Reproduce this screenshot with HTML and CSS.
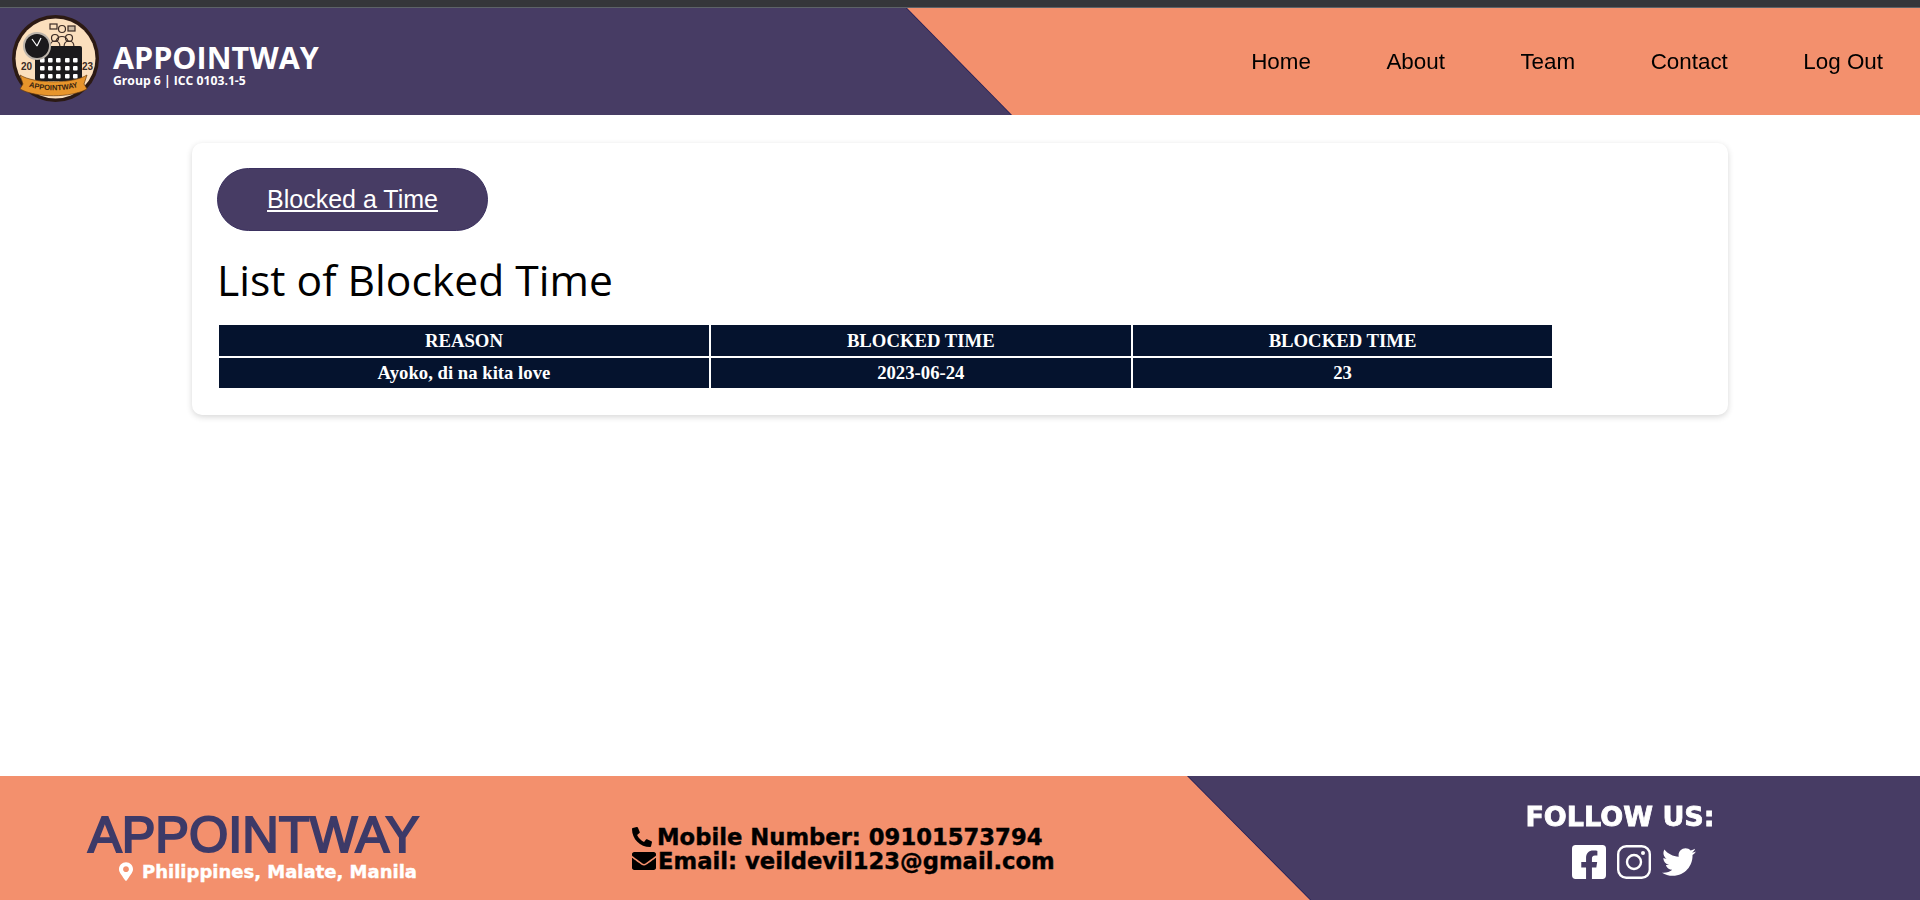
FILE: index.html
```html
<!DOCTYPE html>
<html lang="en">

<head>
    <meta charset="UTF-8">
    <title>Appointway</title>
    <link rel="stylesheet" href="styles.css">
</head>

<body>
    <div class="browser-edge"></div>

    <header class="header">
        <div class="brand">
            <svg class="logo" viewBox="0 0 87 87">
                <circle cx="43.5" cy="43.5" r="43.5" fill="#2c1a14"/>
                <circle cx="43.5" cy="43.5" r="40" fill="#fbdfbd"/>
                <!-- people and speech bubbles -->
                <g fill="none" stroke="#3a2a24" stroke-width="1.2">
                    <rect x="38" y="9" width="7" height="5" fill="#fbdfbd"/>
                    <rect x="56" y="11" width="7" height="5" fill="#cbb9a3"/>
                    <circle cx="50" cy="14" r="3.5" fill="#fbdfbd"/>
                    <circle cx="43" cy="23" r="3.5" fill="#fbdfbd"/>
                    <circle cx="57" cy="23" r="3.5" fill="#fbdfbd"/>
                    <path d="M44 26c2-6 10-6 12 0M38 32c0-5 3-6 5-6s5 1 5 6M52 32c0-5 3-6 5-6s5 1 5 6"/>
                </g>
                <!-- calendar -->
                <rect x="23" y="31" width="47" height="35" rx="2" fill="#1b1a1c"/>
                <g fill="#fff">
                    <rect x="28" y="43" width="4.6" height="4.6" rx="1"/><rect x="36" y="43" width="4.6" height="4.6" rx="1"/><rect x="44" y="43" width="4.6" height="4.6" rx="1"/><rect x="53" y="43" width="4.6" height="4.6" rx="1"/><rect x="61" y="43" width="4.6" height="4.6" rx="1"/>
                    <rect x="28" y="51" width="4.6" height="4.6" rx="1"/><rect x="36" y="51" width="4.6" height="4.6" rx="1"/><rect x="44" y="51" width="4.6" height="4.6" rx="1"/><rect x="53" y="51" width="4.6" height="4.6" rx="1"/><rect x="61" y="51" width="4.6" height="4.6" rx="1"/>
                    <rect x="28" y="59" width="4.6" height="4.6" rx="1"/><rect x="36" y="59" width="4.6" height="4.6" rx="1"/><rect x="44" y="59" width="4.6" height="4.6" rx="1"/><rect x="53" y="59" width="4.6" height="4.6" rx="1"/><rect x="61" y="59" width="4.6" height="4.6" rx="1"/>
                </g>
                <!-- clock -->
                <circle cx="25" cy="31" r="14" fill="#bdb5ab"/>
                <circle cx="25" cy="31" r="12" fill="#1b1a1c"/>
                <path d="M25 31l-5-7M25 31l4-8" stroke="#fff" stroke-width="1.2" fill="none"/>
                <!-- year -->
                <text class="logo-year" x="9" y="55">20</text>
                <text class="logo-year" x="70" y="55">23</text>
                <!-- ribbon -->
                <path d="M8 60c14 9 53 9 67 0l-3 9 3 5c-16 9-51 9-67 0l3-5z" fill="#e8952b" stroke="#6b3d10" stroke-width=".7"/>
                <path id="ribbon-line" d="M12 70c16 7 43 7 59 0" fill="none"/>
                <text class="logo-ribbon"><textPath href="#ribbon-line" startOffset="50%" text-anchor="middle">APPOINTWAY</textPath></text>
            </svg>
            <div class="brand-text">
                <div class="brand-name">APPOINTWAY</div>
                <div class="brand-group">Group 6 | ICC 0103.1-5</div>
            </div>
        </div>
        <div class="edge-line">
            <nav class="nav">
                <a href="#">Home</a>
                <a href="#">About</a>
                <a href="#">Team</a>
                <a href="#">Contact</a>
                <a href="#">Log Out</a>
            </nav>
        </div>
    </header>

    <main class="main">
        <section class="card">
            <a class="btn" href="#">Blocked a Time</a>
            <h1 class="card-title">List of Blocked Time</h1>
            <table class="time-table">
                <tr>
                    <th class="col-reason">REASON</th>
                    <th class="col-time">BLOCKED TIME</th>
                    <th class="col-time">BLOCKED TIME</th>
                </tr>
                <tr>
                    <td>Ayoko, di na kita love</td>
                    <td>2023-06-24</td>
                    <td>23</td>
                </tr>
            </table>
        </section>
    </main>

    <footer class="footer">
        <div class="footer-brand">
            <div class="footer-name">APPOINTWAY</div>
            <div class="footer-address">
                <svg class="icon-pin" viewBox="0 0 384 512"><path d="M172.268 501.67C26.97 291.031 0 256.162 0 192 0 85.961 85.961 0 192 0s192 85.961 192 192c0 64.162-26.97 99.031-172.268 309.67-9.535 13.774-29.93 13.773-39.464 0zM192 272c44.183 0 80-35.817 80-80s-35.817-80-80-80-80 35.817-80 80 35.817 80 80 80z"/></svg>
                <span>Philippines, Malate, Manila</span>
            </div>
        </div>
        <div class="footer-contact">
            <div class="contact-row">
                <svg class="icon-phone" viewBox="0 0 512 512"><path transform="matrix(-1 0 0 1 512 0)" d="M493.4 24.6l-104-24c-11.3-2.6-22.9 3.3-27.5 13.9l-48 112c-4.2 9.8-1.4 21.3 6.9 28l60.6 49.6c-36 76.7-98.9 140.5-177.2 177.2l-49.6-60.6c-6.8-8.3-18.2-11.1-28-6.9l-112 48C3.9 366.5-2 378.1.6 389.4l24 104C27.1 504.2 36.7 512 48 512c256.1 0 464-207.5 464-464 0-11.2-7.7-20.9-18.6-23.4z"/></svg>
                <span>Mobile Number: 09101573794</span>
            </div>
            <div class="contact-row">
                <svg class="icon-mail" viewBox="0 0 512 512"><path d="M502.3 190.8c3.9-3.1 9.7-.2 9.7 4.7V400c0 26.5-21.5 48-48 48H48c-26.5 0-48-21.5-48-48V195.6c0-5 5.7-7.8 9.7-4.7 22.4 17.4 52.1 39.5 154.1 113.6 21.1 15.4 56.7 47.8 92.2 47.6 35.7.3 72-32.8 92.3-47.6 102-74.1 131.6-96.3 154-113.7zM256 320c23.2.4 56.6-29.2 73.4-41.4 132.7-96.3 142.8-104.7 173.4-128.7 5.8-4.5 9.2-11.5 9.2-18.9v-19c0-26.5-21.5-48-48-48H48C21.5 64 0 85.5 0 112v19c0 7.4 3.4 14.3 9.2 18.9 30.6 23.9 40.7 32.4 173.4 128.7 16.8 12.2 50.2 41.8 73.4 41.4z"/></svg>
                <span>Email: veildevil123@gmail.com</span>
            </div>
        </div>
        <div class="edge-line social-edge">
            <div class="footer-social">
                <div class="follow-title">FOLLOW US:</div>
                <div class="follow-icons">
                    <svg viewBox="0 32 448 448"><path d="M400 32H48A48 48 0 0 0 0 80v352a48 48 0 0 0 48 48h137.25V327.69h-63V256h63v-54.64c0-62.15 37-96.48 93.67-96.48 27.14 0 55.52 4.84 55.52 4.84v61h-31.27c-30.81 0-40.42 19.12-40.42 38.73V256h68.78l-11 71.69h-57.78V480H400a48 48 0 0 0 48-48V80a48 48 0 0 0-48-48z"/></svg>
                    <svg viewBox="0 0 34 34"><rect x="1.2" y="1.2" width="31.6" height="31.6" rx="8" fill="none" stroke="#fff" stroke-width="2.4"/><circle cx="17" cy="17" r="7" fill="none" stroke="#fff" stroke-width="2.4"/><circle cx="26" cy="8" r="2"/></svg>
                    <svg viewBox="0 0 512 512"><path d="M459.37 151.716c.325 4.548.325 9.097.325 13.645 0 138.72-105.583 298.558-298.558 298.558-59.452 0-114.68-17.219-161.137-47.106 8.447.974 16.568 1.299 25.34 1.299 49.055 0 94.213-16.568 130.274-44.832-46.132-.975-84.792-31.188-98.112-72.772 6.498.974 12.995 1.624 19.818 1.624 9.421 0 18.843-1.3 27.614-3.573-48.081-9.747-84.143-51.98-84.143-102.985v-1.299c13.969 7.797 30.214 12.67 47.431 13.319-28.264-18.843-46.781-51.005-46.781-87.391 0-19.492 5.197-37.36 14.294-52.954 51.655 63.675 129.3 105.258 216.365 109.807-1.624-7.797-2.599-15.918-2.599-24.04 0-57.828 46.782-104.934 104.934-104.934 30.213 0 57.502 12.67 76.67 33.137 23.715-4.548 46.456-13.32 66.599-25.34-7.798 24.366-24.366 44.833-46.132 57.827 21.117-2.273 41.584-8.122 60.426-16.243-14.292 20.791-32.161 39.308-52.628 54.253z"/></svg>
                </div>
            </div>
        </div>
    </footer>
</body>

</html>
```

FILE: styles.css
```css
body, html {
    margin: 0;
    padding: 0;
    height: 100%;
    overflow: hidden;
    font-family: "Liberation Sans", Arial, sans-serif;
}

body {
    display: flex;
    flex-direction: column;
    background-color: white;
}

.browser-edge {
    height: 7px;
    background-color: #35363a;
    border-bottom: 1px solid #5d6268;
}

.header {
    height: 107px;
    display: flex;
    justify-content: space-between;
    background-color: #473c64;
}

.brand {
    display: flex;
    align-items: center;
    padding-left: 12px;
}

.logo {
    width: 87px;
    height: 87px;
    margin-top: -6px;
}

.logo-year {
    font-family: "Liberation Sans", sans-serif;
    font-size: 10px;
    font-weight: bold;
    fill: #3a2a24;
}

.logo-ribbon {
    font-family: "Liberation Sans", sans-serif;
    font-size: 7.5px;
    font-weight: bold;
    fill: #3a2410;
}

.brand-text {
    margin: 6px 0 0 14px;
    color: white;
    font-family: "Open Sans", sans-serif;
    font-weight: bold;
}

.brand-name {
    font-size: 30.5px;
    line-height: 32px;
}

.brand-group {
    font-size: 12.2px;
    line-height: 15px;
}

/* thin dark line along the slanted edges */
.edge-line {
    display: flex;
    filter: drop-shadow(-1px 0 0 #1e1a55);
}

.nav {
    width: 1013px;
    box-sizing: border-box;
    display: flex;
    align-items: center;
    justify-content: flex-end;
    gap: 75.5px;
    padding: 0 37px 0 0;
    background-color: #f3906d;
    clip-path: polygon(0 0, 100% 0, 100% 100%, 105px 100%);
}

.nav a {
    color: black;
    font-size: 22.4px;
    text-decoration: none;
}

.main {
    flex: 1;
    padding-top: 28px;
}

.card {
    width: 80%;
    box-sizing: border-box;
    margin: 0 auto;
    padding: 25px;
    border-radius: 10px;
    box-shadow: 0 2px 6px rgba(0, 0, 0, 0.16);
    background-color: white;
}

.btn {
    display: inline-block;
    box-sizing: border-box;
    width: 271px;
    height: 63px;
    line-height: 61px;
    text-align: center;
    color: white;
    font-size: 25px;
    background-color: #473c64;
    border: 1px solid #3b3160;
    border-radius: 32px;
}

.card-title {
    margin: 23px 0 19px;
    font-family: "Open Sans", sans-serif;
    font-size: 42.6px;
    font-weight: 400;
    line-height: 50px;
    color: black;
}

.time-table {
    width: 90%;
    color: white;
    font-family: "Liberation Serif", "Times New Roman", serif;
    font-size: 18.72px;
    font-weight: bold;
    text-align: center;
}

.time-table th, .time-table td {
    padding: 0 6px;
    background-color: #05132e;
}

.time-table th {
    height: 31px;
}

.time-table td {
    height: 30px;
}

.col-reason {
    width: 36.85%;
}

.col-time {
    width: 31.57%;
}

.footer {
    height: 124px;
    display: flex;
    background-color: #f3906d;
}

.footer-brand {
    width: 544px;
    box-sizing: border-box;
    padding: 34px 0 0 88px;
}

.footer-name {
    color: #3d3a68;
    font-size: 50.5px;
    line-height: 50px;
    -webkit-text-stroke: 2px #3d3a68;
}

.footer-address {
    display: flex;
    align-items: center;
    gap: 9px;
    margin: 1px 0 0 31px;
    color: white;
    font-family: "DejaVu Sans", sans-serif;
    font-size: 18px;
    font-weight: bold;
    -webkit-text-stroke: 0.4px white;
}

.icon-pin {
    width: 14px;
    height: 21px;
    fill: white;
}

.footer-contact {
    width: 644px;
    box-sizing: border-box;
    padding: 49px 0 0 88px;
    color: black;
    font-family: "DejaVu Sans", sans-serif;
    font-size: 22.7px;
    font-weight: bold;
    -webkit-text-stroke: 0.4px black;
}

.contact-row {
    display: flex;
    align-items: center;
    height: 24px;
    gap: 2px;
}

.icon-phone {
    width: 20px;
    height: 20px;
    margin-right: 3px;
}

.icon-mail {
    width: 24px;
    height: 24px;
}

.social-edge {
    flex: 1;
}

.footer-social {
    flex: 1;
    display: flex;
    flex-direction: column;
    align-items: center;
    padding: 26px 0 0 132px;
    background-color: #473c64;
    clip-path: polygon(0 0, 100% 0, 100% 100%, 123px 100%);
    color: white;
}

.follow-title {
    font-family: "DejaVu Sans", sans-serif;
    font-size: 27px;
    line-height: 30px;
    font-weight: bold;
    -webkit-text-stroke: 0.8px white;
}

.follow-icons {
    display: flex;
    gap: 11px;
    margin: 13px 0 0 28px;
}

.follow-icons svg {
    width: 34px;
    height: 34px;
    fill: white;
}
```
